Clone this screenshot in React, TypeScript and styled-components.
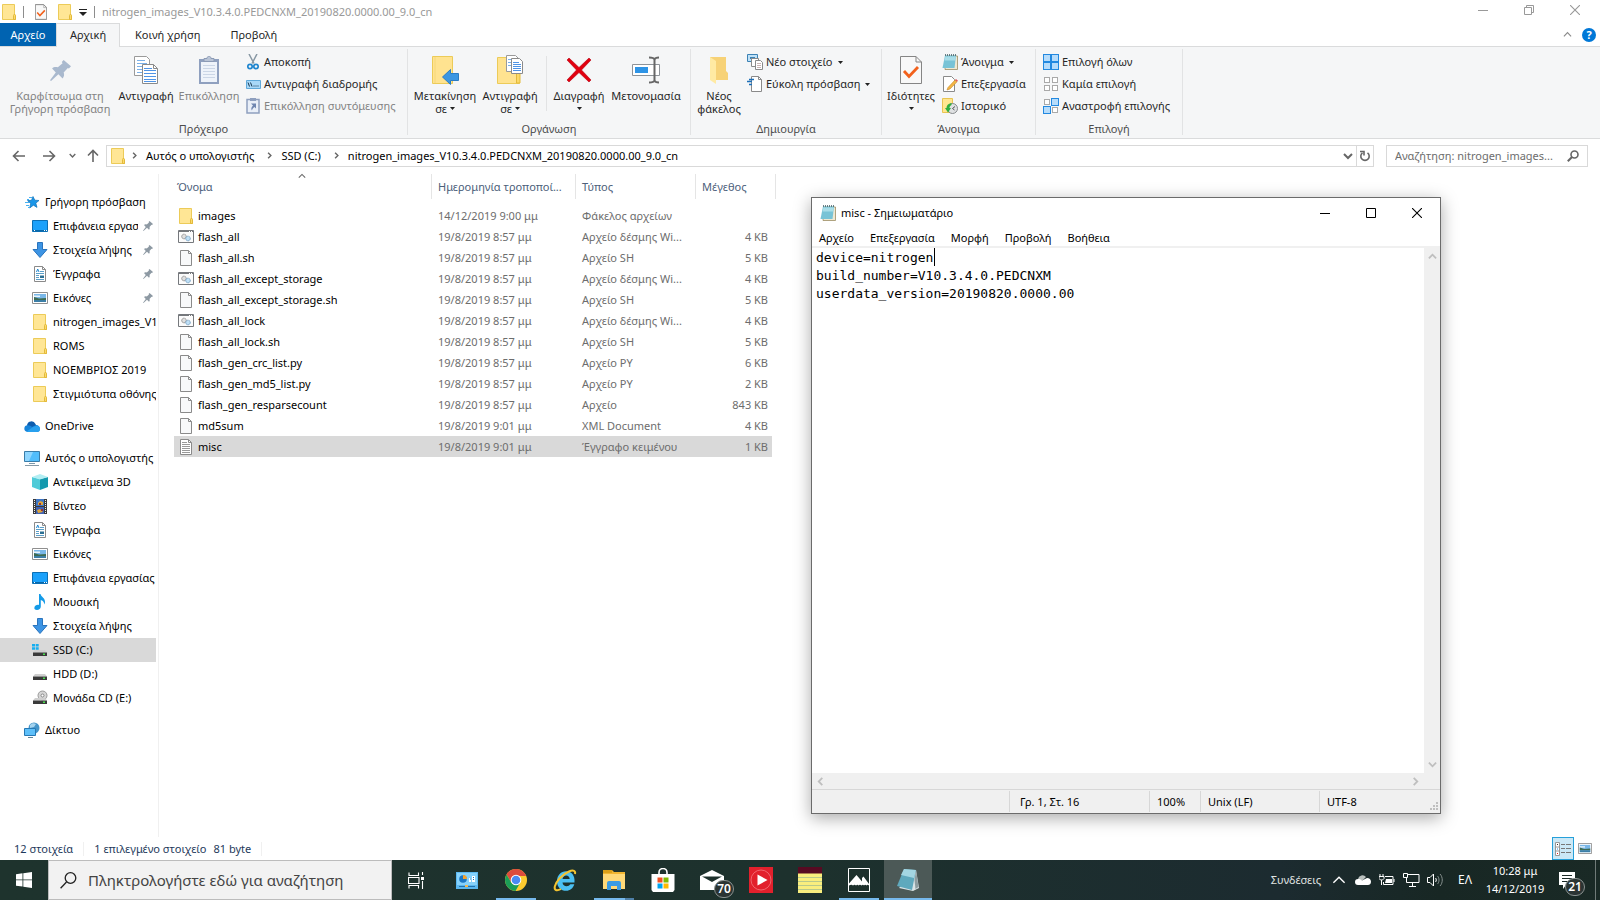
import React from 'react';
import styled, { createGlobalStyle, css } from 'styled-components';

const Global = createGlobalStyle`
  * { box-sizing: border-box; }
  html, body { margin: 0; height: 100%; }
  #root { height: 100%; }
  body {
    font-family: "Noto Sans", "Open Sans", sans-serif;
    font-size: 11px;
    line-height: 14px;
    color: #000;
    background: #fff;
    overflow: hidden;
  }
  button, input, textarea { font: inherit; color: inherit; margin: 0; padding: 0; border: 0; background: none; border-radius: 0; }
  svg { display: block; flex: none; }
  a { color: inherit; text-decoration: none; }
  ul { list-style: none; margin: 0; padding: 0; }
`;

/* ---------- icons ---------- */

const FolderIcon = () => (
  <svg width="14" height="16" viewBox="0 0 14 16">
    <path d="M.5.5h12v11h1v4H.5z" fill="#ffe695" stroke="#eccb58" />
    <path d="M11.5 15.500v-4l1-1.500 1 1.500v4z" fill="#fbdb6c" stroke="#e3b93b" />
  </svg>
);

const PinIcon = ({ size, color }: { size: number; color: string }) => (
  <svg width={size} height={size} viewBox="0 0 20 20">
    <path d="M13 0l7 6-2 2-1-.5-4 4.500c.8 2 .5 4-1 5.500L8 13.500 1 20l-1-.6L5.500 12 2 8c1.500-1.500 3.500-1.700 5.500-1L12 3l-.8-1.200z" fill={color} />
  </svg>
);

const PageIcon = ({ lines = false }: { lines?: boolean }) => (
  <svg width="14" height="16" viewBox="0 0 14 16">
    <path d="M1.500.5h8l3 3v12h-11z" fill={lines ? '#fff' : '#f8f9fa'} stroke="#8a8a8a" />
    <path d="M9.500.5v3h3" fill="none" stroke="#8a8a8a" />
    {lines && <path d="M3 3.500h5M3 5.500h8M3 7.500h8M3 9.500h8M3 11.500h8M3 13.500h8" stroke="#999" />}
  </svg>
);

const BatchIcon = () => (
  <svg width="16" height="13" viewBox="0 0 16 13">
    <path d="M.5.5h15v12H.5z" fill="#fbfbfb" stroke="#75787c" />
    <path d="M1 1.500h14" stroke="#75787c" />
    <path d="M11 1.500h1M13 1.500h1" stroke="#fff" />
    <circle cx="6" cy="6.500" r="2.300" fill="#e0e0e0" stroke="#858585" strokeDasharray="1.300 .5" />
    <circle cx="10" cy="8.500" r="2.300" fill="#bfe0f7" stroke="#6f9cc0" strokeDasharray="1.300 .5" />
  </svg>
);

const StarIcon = () => (
  <svg width="16" height="16" viewBox="0 0 16 16">
    <path d="M9 2.500l1.800 3.700 4.200.3-3.200 2.600 1.200 4.300-3.600-2.200-3.700 2.800 1-4.600L3.500 6.600l4-.3z" fill="#1a96e8" stroke="#0a6fb8" strokeWidth=".7" />
    <path d="M5 3.500h3M3 5.500h2M1 8.500h4M2 11.500h3M4 13.500h2" stroke="#47b0f0" />
  </svg>
);

const DesktopIcon = () => (
  <svg width="16" height="12" viewBox="0 0 16 12">
    <path d="M.5.5h15v11H.5z" fill="#1ba1fb" stroke="#0b6fb5" />
    <path d="M1 10.500h14" stroke="#0867a8" />
    <path d="M2 10.500h1M12 10.500h1M14 10.500h1" stroke="#fff" />
  </svg>
);

const DownIcon = () => (
  <svg width="16" height="16" viewBox="0 0 16 16">
    <path d="M5.500.5h5v7h4.500L8 15.500 1 7.500h4.500z" fill="#3d94e4" stroke="#2a74bd" />
  </svg>
);

const DocsIcon = () => (
  <svg width="12" height="16" viewBox="0 0 12 16">
    <path d="M.5.5h8l3 3v12H.5z" fill="#fff" stroke="#8a8a8a" />
    <path d="M8.500.5v3h3" fill="none" stroke="#8a8a8a" />
    <path d="M6 5.500h4M2 7.500h8M2 9.500h3M2 11.500h3M2 13.500h8" stroke="#5b9fc9" />
    <path d="M2.500 6l1.200-3L5 6" fill="none" stroke="#1e87cf" />
    <path d="M6 9.500h4v2.500H6z" fill="#2b6f93" />
  </svg>
);

const PicturesIcon = ({ w = 16, h = 12 }: { w?: number; h?: number }) => (
  <svg width={w} height={h} viewBox="0 0 16 12" preserveAspectRatio="none">
    <path d="M.5.5h15v11H.5z" fill="#fff" stroke="#8f8f8f" />
    <path d="M2 2h12v8H2z" fill="#79b7e8" />
    <path d="M2 3.500h6v1.500H2z" fill="#e8f3fb" />
    <path d="M2 5l5 1.500 7-.5v2H2z" fill="#3e6b52" />
    <path d="M2 8h12v2H2z" fill="#3c7ea6" />
  </svg>
);

const OneDriveIcon = () => (
  <svg width="16" height="11" viewBox="0 0 16 11">
    <path d="M3 4a4.500 4.500 0 018.500-1L13 6l-9 3z" fill="#0d5cae" />
    <path d="M3.500 11A3.400 3.400 0 014 4.200c2 0 3 .8 4 1.800l4-2c2.500 0 4 2 4 4s-1.300 3-3 3z" fill="#1683d9" />
    <path d="M2.500 10.500L9 6l4-1.500c2 .4 3 2 3 3.700S14.700 11 13 11H4z" fill="#28a0ee" />
  </svg>
);

const PcIcon = () => (
  <svg width="16" height="15" viewBox="0 0 16 15">
    <path d="M.5.5h15v10H.5z" fill="#52bdfb" stroke="#3a7ca8" />
    <path d="M1 1h8L5 10H1z" fill="#8fd6ff" />
    <path d="M5 12.500h6" stroke="#7b98aa" />
    <path d="M1 14.500h14" stroke="#8599a6" />
  </svg>
);

const CubeIcon = () => (
  <svg width="16" height="16" viewBox="0 0 16 16">
    <path d="M0 3l8 2v11l-8-3z" fill="#4fcbd8" />
    <path d="M16 3L8 5v11l8-3z" fill="#1499ae" />
    <path d="M0 3l8-3 8 3-8 2.500z" fill="#b3eef3" />
  </svg>
);

const VideoIcon = () => (
  <svg width="14" height="15" viewBox="0 0 14 15">
    <path d="M0 0h14v15H0z" fill="#3b3b3b" />
    <path d="M3 0h8v7H3z" fill="#3f76c4" />
    <path d="M3 8h8v7H3z" fill="#3e62b5" />
    <path d="M5 4l2-2 3 1v3H5zM4 11l3-1 3 3-5 1z" fill="#e0a73b" />
    <path d="M6 4h2v2H6zM8 10h2v2H8z" fill="#963434" />
    <path d="M1.500 1v14M12.500 1v14" stroke="#eee" strokeDasharray="1 1" />
  </svg>
);

const MusicIcon = () => (
  <svg width="12" height="16" viewBox="0 0 12 16">
    <path d="M5 0h1.500c.5 3 5 4 4.500 8.500-.1.800-.5 1.500-1 2C10.500 7.500 8 6.500 6.800 6v6.500C6.800 14.500 5 16 3 16s-3-1-2.600-2.500C.8 11.500 3 10.500 5 11z" fill="#149be8" />
  </svg>
);

const DriveIcon = ({ kind }: { kind: 'win' | 'hdd' | 'cd' }) => (
  <svg width="16" height="16" viewBox="0 0 16 16">
    {kind === 'win' && <path d="M0 2h3v2.500H0zM3.700 2h3v2.500h-3zM0 5.200h3v2.500H0zM3.700 5.200h3v2.500h-3z" fill="#17aef0" />}
    {kind === 'cd' && (
      <g>
        <circle cx="10.500" cy="5.500" r="4.500" fill="#d6d6d6" stroke="#9a9a9a" />
        <circle cx="10.500" cy="5.500" r="1.500" fill="#fff" stroke="#888" />
      </g>
    )}
    <path d="M3 8h10l2 2.500H1z" fill="#cfcfcf" />
    <path d="M1 10.500h14V14H1z" fill="#3a3a3a" />
    <path d="M11 12.300h2" stroke="#49e04d" strokeWidth="1.500" />
  </svg>
);

const NetworkIcon = () => (
  <svg width="16" height="16" viewBox="0 0 16 16">
    <circle cx="10" cy="6" r="5.500" fill="#4595c9" />
    <path d="M6 3c2-2 4-2 6-1l-2 3-4 1z" fill="#a5d3ee" />
    <path d="M.5 6.500h11v7H.5z" fill="#5dbff9" stroke="#2678b4" />
    <path d="M4 15.500h5" stroke="#5f8297" />
  </svg>
);

const NotepadIcon = () => (
  <svg width="16" height="16" viewBox="0 0 16 16">
    <path d="M4 2h11.500v13.500H3z" fill="#efe8d2" stroke="#9c8d62" strokeWidth=".8" />
    <path d="M3 1.500h11L12.500 14H.5z" fill="#78c3d6" />
    <path d="M3.300 2.500h10.400l-.5 4H2.600z" fill="#a8dde8" />
    <path d="M3 1h11.500" stroke="#3c5963" strokeWidth="1.500" strokeDasharray="1 1" />
  </svg>
);

const CopyIcon = () => (
  <svg width="24" height="28" viewBox="0 0 24 28">
    <path d="M.5.5h12l3 3v16H.5z" fill="#fff" stroke="#9a9a9a" />
    <path d="M3 4.500h8M3 7.500h10M3 10.500h5M3 13.500h5M3 16.500h5" stroke="#7ab0e8" />
    <path d="M8.500 8.500h11l4 4v15h-15z" fill="#fff" stroke="#8a8a8a" />
    <path d="M19.500 8.500v4h4" fill="none" stroke="#8a8a8a" />
    <path d="M10 12.500h8M10 14.500h12M10 17.500h12M10 20.500h12M10 23.500h12M10 25.500h12" stroke="#4f94e6" />
  </svg>
);

const PasteIcon = () => (
  <svg width="20" height="28" viewBox="0 0 20 28">
    <path d="M0 3h20v25H0z" fill="#8fa0bf" />
    <path d="M2 6h16v20H2z" fill="#eef3fa" />
    <path d="M4 9.500h12M4 12.500h12M4 15.500h12M4 18.500h12M4 21.500h12" stroke="#cbd6e6" />
    <path d="M5 2.500h3c0-3 4-3 4 0h3v3H5z" fill="#b9c4d6" stroke="#8b9ab5" />
  </svg>
);

const MoveToIcon = () => (
  <svg width="28" height="30" viewBox="0 0 28 30">
    <path d="M1.500 1.500h20v27h-20z" fill="#ffe390" stroke="#eccb58" />
    <path d="M4 2v26" stroke="#f6d778" />
    <path d="M11.500 22l8-7.500v4h8v7h-8v4z" fill="#3b96e2" stroke="#2a7cc4" />
  </svg>
);

const CopyToIcon = () => (
  <svg width="28" height="30" viewBox="0 0 28 30">
    <path d="M1.500 2.500h19v15h3v11h-22z" fill="#ffe390" stroke="#eccb58" />
    <path d="M20.500 28v-9l2-2 1.500 2v9z" fill="#fbd968" stroke="#e3b93b" />
    <path d="M10.500.5h9l3 3v13h-12z" fill="#fff" stroke="#9a9a9a" />
    <path d="M12 4.500h6M12 7.500h4M12 10.500h4" stroke="#7ab0e8" />
    <path d="M15.500 3.500h8l3 3v12h-11z" fill="#fff" stroke="#8a8a8a" />
    <path d="M17 7.500h6M17 9.500h8M17 11.500h8M17 13.500h8M17 15.500h8" stroke="#4f94e6" />
  </svg>
);

const DeleteIcon = () => (
  <svg width="26" height="26" viewBox="0 0 26 26">
    <path d="M3 1l10 9.500L23 1l2 2-9.500 10L25 23l-2 2-10-9.500L3 25l-2-2 9.500-10L1 3z" fill="#e2000f" stroke="#b60010" strokeWidth=".6" />
  </svg>
);

const RenameIcon = () => (
  <svg width="28" height="28" viewBox="0 0 28 28">
    <path d="M.5 8.500h27v11H.5z" fill="#fff" stroke="#8e9398" />
    <path d="M3 11h13v6H3z" fill="#2e94e6" />
    <path d="M17 1.500c3 0 5 .5 5.500 2 .5-1.500 2-2 4.500-2M17 26.500c3 0 5-.5 5.500-2 .5 1.500 2 2 4.500 2M22.500 3v22" fill="none" stroke="#666" strokeWidth="2" />
  </svg>
);

const NewFolderIcon = () => (
  <svg width="20" height="28" viewBox="0 0 20 28">
    <path d="M1 1h16v14l2 2v7H1z" fill="#f7d277" />
    <path d="M1 1l6 4v23l-6-4z" fill="#ffeaa3" />
  </svg>
);

const CheckPageIcon = ({ w = 22, h = 28 }: { w?: number; h?: number }) => (
  <svg width={w} height={h} viewBox="0 0 22 28">
    <path d="M.5.500h15.500l5.500 5.500v21.500H.5z" fill="#f8f8f8" stroke="#858585" strokeWidth={w < 20 ? 1.800 : 1} />
    <path d="M16 .5V6h5.500" fill="none" stroke="#858585" />
    <path d="M4 15l5 5.500 9-9.500" fill="none" stroke="#f2611c" strokeWidth="2.800" />
  </svg>
);

const CutIcon = () => (
  <svg width="12" height="16" viewBox="0 0 12 16">
    <path d="M2 0l5 9.500M10 0L5 9.500" stroke="#8797a3" strokeWidth="1.500" />
    <circle cx="3" cy="12.500" r="2.200" fill="none" stroke="#2086cf" strokeWidth="1.700" />
    <circle cx="9" cy="12.500" r="2.200" fill="none" stroke="#2086cf" strokeWidth="1.700" />
  </svg>
);

const CopyPathIcon = () => (
  <svg width="15" height="9" viewBox="0 0 15 9">
    <path d="M.5.5h14v8H.5z" fill="#a8d8f8" stroke="#5fa9da" />
    <path d="M2 2.500l1.500 4M4.500 2.500l1.500 4M7.500 6h1M9.500 6h1M11.500 6h1" stroke="#16364f" />
  </svg>
);

const PasteShortcutIcon = () => (
  <svg width="14" height="16" viewBox="0 0 14 16">
    <path d="M1 1.500h12v13.500H1z" fill="#e9eff8" stroke="#8fa0bf" strokeWidth="1.500" />
    <path d="M4 0h6v3H4z" fill="#8fa0bf" />
    <path d="M5 5.500h5v5L8.500 9C7 10 6 11.500 6 12.500c-1.500-2 0-4 1-5z" fill="#6f86b0" />
  </svg>
);

const NewItemIcon = () => (
  <svg width="16" height="16" viewBox="0 0 16 16">
    <path d="M.5.5h10v7H.5z" fill="#bfe1f7" stroke="#3c82b5" />
    <path d="M3 3h5v2H3z" fill="#3c82b5" />
    <path d="M4.500 4.500h7v8h-7z" fill="#fff" stroke="#8a8a8a" />
    <path d="M8.500 6.500h5l2 2v7h-7z" fill="#fff" stroke="#8a8a8a" />
    <path d="M10 9.500h4M10 11.500h4M10 13.500h4" stroke="#c9b4b4" />
  </svg>
);

const EasyAccessIcon = () => (
  <svg width="16" height="16" viewBox="0 0 16 16">
    <path d="M4.500.5h7l3 3v12h-10z" fill="#fff" stroke="#8a8a8a" />
    <path d="M11.500.5v3h3" fill="none" stroke="#8a8a8a" />
    <path d="M2 3.500h5M0 5.500h5M2 8.500h3" stroke="#1d6fb8" strokeWidth="1.300" />
  </svg>
);

const EditIcon = () => (
  <svg width="16" height="16" viewBox="0 0 16 16">
    <path d="M1.500.5h8l3 3v12h-11z" fill="#fff" stroke="#8a8a8a" />
    <path d="M6 11.500L13 4l2 1.800L8 13l-3 1z" fill="#f3b545" stroke="#c58a2b" strokeWidth=".6" />
    <path d="M13 4l1-1 2 1.800-1 1z" fill="#e0565b" />
  </svg>
);

const HistoryIcon = () => (
  <svg width="16" height="16" viewBox="0 0 16 16">
    <path d="M.5.5h10v14H.5z" fill="#ffe690" stroke="#e8c452" />
    <circle cx="10.500" cy="10.500" r="5" fill="#dfe1e3" stroke="#85898c" />
    <path d="M10.500 10.500l2.500-2M10.500 10.500l2 1.500" stroke="#555" />
    <path d="M9.500 5C6 5.500 4.500 7.500 4.500 10H3l3 4.500L9 10H7.500c0-1.500.8-2.500 2-3z" fill="#2fae3e" />
  </svg>
);

const SelectIcon = ({ on }: { on: boolean[] }) => (
  <svg width="16" height="16" viewBox="0 0 16 16">
    {on.map((v, i) => {
      const x = (i % 2) * 8;
      const y = Math.floor(i / 2) * 8;
      return v ? (
        <rect key={i} x={x + 0.5} y={y + 0.5} width="7" height="7" fill="#b6dcfb" stroke="#2389e0" />
      ) : (
        <rect key={i} x={x + 1.500} y={y + 1.500} width="5" height="5" fill="#fff" stroke="#a9a9a9" />
      );
    })}
  </svg>
);

type ChevronProps = { dir: 'up' | 'down' | 'left' | 'right'; w?: number; color?: string; sw?: number };
const Chevron = ({ dir, w = 9, color = '#666', sw = 1.300 }: ChevronProps) => {
  const rot = { down: 0, left: 90, up: 180, right: 270 }[dir];
  return (
    <svg width={w} height={w} viewBox="0 0 10 10">
      <path d="M1 3l4 4 4-4" transform={`rotate(${rot} 5 5)`} fill="none" stroke={color} strokeWidth={sw} />
    </svg>
  );
};

const ArrowIcon = ({ deg }: { deg: number }) => (
  <svg width="14" height="14" viewBox="0 0 14 14">
    <path d="M13 7H2M6.500 2L1.500 7l5 5" transform={`rotate(${deg} 7 7)`} fill="none" stroke="#666" strokeWidth="1.600" />
  </svg>
);

const Caret = () => (
  <svg width="5" height="3" viewBox="0 0 5 3">
    <path d="M0 0h5L2.500 3z" fill="#222" />
  </svg>
);

const MinIcon = () => (
  <svg width="10" height="10" viewBox="0 0 10 10"><path d="M0 5.500h10" stroke="currentColor" /></svg>
);
const MaxIcon = () => (
  <svg width="10" height="10" viewBox="0 0 10 10"><path d="M.5.5h9v9h-9z" fill="none" stroke="currentColor" /></svg>
);
const RestoreIcon = () => (
  <svg width="10" height="10" viewBox="0 0 10 10"><path d="M.5 2.500h7v7h-7zM2.500 2.500v-2h7v7h-2" fill="none" stroke="currentColor" /></svg>
);
const CloseIcon = () => (
  <svg width="10" height="10" viewBox="0 0 10 10"><path d="M0 0l10 10M10 0L0 10" stroke="currentColor" strokeWidth="1.100" /></svg>
);

/* ---------- explorer: title bar and tabs ---------- */

const Desktop = styled.div`
  position: relative;
  display: flex;
  flex-direction: column;
  height: 100%;
  min-height: 640px;
`;

const Explorer = styled.main`
  flex: 1;
  min-height: 0;
  display: flex;
  flex-direction: column;
`;

const TitleBar = styled.header`
  display: flex;
  align-items: center;
  height: 23px;
  color: #999;
`;

const QuickTools = styled.div`
  display: flex;
  align-items: center;
  gap: 7px;
  padding: 1px 7px 0 2px;
`;

const ToolButton = styled.button<{ $pad?: number }>`
  display: flex;
  align-items: center;
  padding: 0 ${(p) => p.$pad || 0}px;
`;

const Bar = styled.span`
  width: 1px;
  height: 12px;
  background: #8d8d8d;
`;

const WindowTitle = styled.h1`
  flex: 1;
  margin: 0;
  font-size: 11px;
  font-weight: 400;
`;

const WindowButton = styled.button<{ $h: number }>`
  display: flex;
  justify-content: center;
  align-items: center;
  width: 46px;
  height: ${(p) => p.$h}px;
`;

const WindowButtons = styled.div<{ $pad?: number }>`
  display: flex;
  align-self: flex-start;
  padding-right: ${(p) => p.$pad || 0}px;
`;

const Tabs = styled.nav`
  display: flex;
  height: 24px;
  border-bottom: 1px solid #dadbdc;
`;

const Tab = styled.button<{ $kind?: 'file' | 'active' }>`
  height: 23px;
  padding: 0 15px;
  color: #262626;
  ${(p) => p.$kind === 'file' && css`
    width: 56px;
    padding: 0;
    background: #0063b1;
    color: #fff;
  `}
  ${(p) => p.$kind === 'active' && css`
    width: 64px;
    height: 24px;
    padding: 0 0 2px;
    background: #f5f6f7;
    border: 1px solid #dadbdc;
    border-bottom: 0;
  `}
`;

const TabsEnd = styled.div`
  display: flex;
  align-items: center;
  gap: 10px;
  margin-left: auto;
  padding-right: 4px;
`;

const HelpButton = styled.button`
  width: 14px;
  height: 14px;
  border-radius: 7px;
  background: #0078d7;
  color: #fff;
  font-weight: 700;
  line-height: 14px;
`;

/* ---------- ribbon ---------- */

const Ribbon = styled.section`
  display: flex;
  height: 92px;
  padding: 2px 0 3px;
  background: #f5f6f7;
  border-bottom: 1px solid #dadbdc;
`;

const Group = styled.div<{ $w: number }>`
  display: flex;
  flex-direction: column;
  flex: none;
  width: ${(p) => p.$w}px;
  border-right: 1px solid #e2e3e4;
`;

const GroupBody = styled.div<{ $pad?: number }>`
  display: flex;
  flex: 1;
  padding-left: ${(p) => p.$pad || 0}px;
`;

const GroupLabel = styled.div`
  height: 15px;
  line-height: 18px;
  text-align: center;
  color: #4c4c4c;
`;

const BigButton = styled.button<{ $w: number }>`
  display: flex;
  flex-direction: column;
  align-items: center;
  width: ${(p) => p.$w}px;
  padding-top: 4px;
  line-height: 13px;
  white-space: nowrap;
  color: #262626;
  &:disabled { color: #838383; }
`;

const BigIcon = styled.span`
  display: flex;
  align-items: center;
  height: 34px;
  margin-bottom: 2px;
`;

const CaretLine = styled.span`
  display: flex;
  align-items: center;
  justify-content: center;
  gap: 3px;
  height: 13px;
`;

const GroupSplit = styled.span`
  width: 1px;
  height: 55px;
  margin: 7px 3px 0 4px;
  background: #e2e3e4;
`;

const SmallColumn = styled.div<{ $pad?: number }>`
  display: flex;
  flex-direction: column;
  padding: 2px 0 0 ${(p) => p.$pad || 0}px;
`;

const SmallButton = styled.button`
  display: flex;
  align-items: center;
  gap: 3px;
  height: 22px;
  white-space: nowrap;
  color: #262626;
  &:disabled { color: #838383; }
  svg:last-child:not(:first-child) { margin-left: 2px; }
`;

const SmallIcon = styled.span`
  display: flex;
  justify-content: center;
  width: 16px;
`;

type BigProps = { w: number; icon: React.ReactNode; lines: string[]; menu?: boolean; disabled?: boolean };
const Big = ({ w, icon, lines, menu, disabled }: BigProps) => (
  <BigButton $w={w} disabled={disabled}>
    <BigIcon>{icon}</BigIcon>
    <span>{lines[0]}</span>
    {(lines[1] || menu) && <CaretLine>{lines[1]}{menu && <Caret />}</CaretLine>}
  </BigButton>
);

type SmallProps = { icon: React.ReactNode; label: string; menu?: boolean; disabled?: boolean };
const Small = ({ icon, label, menu, disabled }: SmallProps) => (
  <SmallButton disabled={disabled}>
    <SmallIcon>{icon}</SmallIcon>
    <span>{label}</span>
    {menu && <Caret />}
  </SmallButton>
);

/* ---------- address row ---------- */

const AddressRow = styled.div`
  display: flex;
  align-items: center;
  height: 33px;
  padding: 0 12px;
`;

const NavButtons = styled.div`
  display: flex;
  align-items: center;
  width: 94px;
  gap: 16px;
  button:nth-child(3) { margin: 0 -6px 0 -3px; }
`;

const AddressBox = styled.div`
  display: flex;
  align-items: center;
  flex: 1;
  height: 22px;
  padding-left: 4px;
  border: 1px solid #d9d9d9;
`;

const Crumbs = styled.ul`
  display: flex;
  flex: 1;
  li { display: flex; align-items: center; gap: 8px; padding: 0 6px 0 6px; }
`;

const AddressTool = styled.button<{ $line?: boolean }>`
  display: flex;
  align-items: center;
  justify-content: center;
  width: 17px;
  height: 20px;
  border-left: ${(p) => (p.$line ? '1px solid #d9d9d9' : '0')};
`;

const SearchBox = styled.label`
  display: flex;
  align-items: center;
  width: 202px;
  height: 22px;
  margin-left: 12px;
  padding: 0 8px;
  border: 1px solid #d9d9d9;
  input { flex: 1; min-width: 0; outline: 0; text-overflow: ellipsis; }
  input::placeholder { color: #6d6d6d; opacity: 1; }
`;

/* ---------- navigation pane and file list ---------- */

const Body = styled.div`
  display: flex;
  flex: 1;
  min-height: 0;
  padding-top: 2px;
`;

const Sidebar = styled.nav`
  flex: none;
  width: 159px;
  padding: 16px 2px 0 0;
  border-right: 1px solid #f0f0f0;
  overflow: hidden;
`;

const TreeGroup = styled.ul`
  margin-bottom: 8px;
`;

const TreeLink = styled.a<{ $top?: boolean; $selected?: boolean }>`
  display: flex;
  align-items: center;
  gap: 5px;
  height: 24px;
  padding-left: ${(p) => (p.$top ? 24 : 32)}px;
  background: ${(p) => (p.$selected ? '#d9d9d9' : 'transparent')};
`;

const TreeText = styled.span`
  flex: 1;
  min-width: 0;
  overflow: hidden;
  white-space: nowrap;
`;

const PinSlot = styled.span`
  padding-right: 3px;
`;

const ListPane = styled.section`
  flex: 1;
  padding-left: 15px;
`;

const FileTable = styled.table`
  width: 598px;
  table-layout: fixed;
  border-collapse: collapse;
`;

const HeadCell = styled.th`
  position: relative;
  height: 31px;
  padding: 0;
  vertical-align: top;
  font-weight: 400;
`;

const HeadButton = styled.button<{ $pad: number; $wide?: boolean }>`
  display: block;
  width: ${(p) => (p.$wide ? '80px' : '100%')};
  height: 25px;
  padding-left: ${(p) => p.$pad}px;
  border-right: 1px solid #e5e5e5;
  text-align: left;
  white-space: nowrap;
  color: #4c607a;
`;

const SortMark = styled.span`
  position: absolute;
  top: -2px;
  left: 48%;
`;

const FileRow = styled.tr<{ $selected?: boolean }>`
  height: 21px;
  background: ${(p) => (p.$selected ? '#d9d9d9' : 'transparent')};
`;

const Cell = styled.td<{ $right?: boolean }>`
  height: 21px;
  padding: 0 4px 0 6px;
  text-align: ${(p) => (p.$right ? 'right' : 'left')};
  white-space: nowrap;
  color: #6d6d6d;
`;

const NameCell = styled(Cell)`
  color: #000;
  padding-left: 4px;
`;

const FileName = styled.span`
  display: flex;
  align-items: center;
  gap: 4px;
`;

const StatusBar = styled.footer`
  display: flex;
  align-items: center;
  height: 23px;
  padding-left: 14px;
  color: #1e395b;
`;

const StatusPart = styled.span`
  padding-right: 10px;
  margin-right: 10px;
  border-right: 1px solid #f0f0f0;
  span { margin-left: 7px; }
`;

const ViewButtons = styled.div`
  display: flex;
  align-self: stretch;
  margin-left: auto;
  padding-right: 4px;
`;

const ViewButton = styled.button<{ $on?: boolean }>`
  display: flex;
  align-items: center;
  justify-content: center;
  width: 22px;
  border: 1px solid ${(p) => (p.$on ? '#26a0da' : 'transparent')};
  background: ${(p) => (p.$on ? '#cbe8f6' : 'transparent')};
`;

/* ---------- notepad ---------- */

const Notepad = styled.section`
  position: absolute;
  left: 811px;
  top: 197px;
  width: 630px;
  height: 617px;
  display: flex;
  flex-direction: column;
  background: #fff;
  border: 1px solid #6b6b6b;
  box-shadow: 0 4px 16px rgba(0, 0, 0, 0.34);
`;

const NoteTitle = styled.header`
  display: flex;
  align-items: center;
  gap: 5px;
  height: 29px;
  padding-left: 8px;
  h2 { flex: 1; margin: 0; font-size: 11px; font-weight: 400; }
`;

const NoteMenu = styled.nav`
  display: flex;
  gap: 16px;
  height: 21px;
  padding: 3px 0 0 7px;
  border-bottom: 2px solid #f0f0f0;
`;

const NoteBody = styled.div`
  display: grid;
  grid-template-columns: 1fr 16px;
  grid-template-rows: 1fr 16px;
  flex: 1;
  background: #f0f0f0;
`;

const NotePage = styled.div`
  position: relative;
  display: flex;
  background: #fff;
  font: 13px/18px "DejaVu Sans Mono", monospace;
  textarea {
    flex: 1;
    padding: 1px 4px 0;
    border: 0;
    outline: 0;
    resize: none;
    overflow: hidden;
  }
`;

const TextCaret = styled.span`
  position: absolute;
  top: 0;
  left: calc(15ch + 5px);
  width: 1px;
  height: 18px;
  background: #000;
`;

const ScrollBar = styled.div<{ $vertical?: boolean }>`
  display: flex;
  flex-direction: ${(p) => (p.$vertical ? 'column' : 'row')};
  justify-content: space-between;
  align-items: center;
  padding: ${(p) => (p.$vertical ? '4px 0' : '0 4px')};
`;

const NoteStatus = styled.footer`
  display: grid;
  grid-template-columns: 198px 140px 51px 119px 1fr;
  height: 24px;
  padding: 1px 0;
  background: #f0f0f0;
  border-top: 1px solid #d7d7d7;
`;

const NoteField = styled.span<{ $pad?: number; $last?: boolean }>`
  display: flex;
  align-items: center;
  justify-content: space-between;
  padding-left: ${(p) => p.$pad ?? 7}px;
  border-right: ${(p) => (p.$last ? '0' : '1px solid #d7d7d7')};
`;

const Grip = styled.span`
  align-self: flex-end;
  padding: 0 1px 1px 0;
`;

/* ---------- taskbar ---------- */

const Taskbar = styled.footer`
  display: flex;
  flex: none;
  height: 40px;
  background: linear-gradient(90deg, #1e332d 0%, #1d312d 50%, #1c2b30 80%, #182724 90%, #1a2a26 100%);
  color: #fff;
`;

const StartButton = styled.button`
  display: flex;
  align-items: center;
  justify-content: center;
  width: 48px;
`;

const TaskSearch = styled.label`
  display: flex;
  align-items: center;
  gap: 11px;
  width: 344px;
  padding-left: 11px;
  background: #f2f2f2;
  border: 1px solid #bcbcbc;
  color: #333;
  font-size: 15px;
  input { flex: 1; min-width: 0; height: 28px; outline: 0; }
  input::placeholder { color: #444; opacity: 1; }
`;

const TaskButton = styled.button<{ $state?: 'open' | 'active' | 'stack' }>`
  position: relative;
  display: flex;
  align-items: center;
  justify-content: center;
  width: 48px;
  margin-right: 1px;
  background: ${(p) => (p.$state === 'active' ? '#4c5957' : 'transparent')};
  &::after {
    content: "";
    position: absolute;
    bottom: 0;
    left: ${(p) => (p.$state === 'active' ? 0 : 4)}px;
    right: ${(p) => (p.$state === 'active' ? 0 : 4)}px;
    height: 2px;
    background: ${(p) =>
      !p.$state ? 'transparent' : p.$state === 'stack' ? 'linear-gradient(90deg, #76b9ed 31px, #4f80a8 31px)' : '#76b9ed'};
  }
`;

const TaskView = styled(TaskButton)`
  width: 49px;
  margin-right: 2px;
`;

const Badge = styled.span<{ $x: number; $y: number }>`
  position: absolute;
  left: ${(p) => p.$x}px;
  top: ${(p) => p.$y}px;
  min-width: 20px;
  height: 18px;
  border: 1px solid #8a9290;
  border-radius: 9px;
  background: #2b3433;
  font-size: 12px;
  font-weight: 600;
  line-height: 16px;
  text-align: center;
`;

const Tray = styled.div`
  display: flex;
  align-items: center;
  margin-left: auto;
`;

const TrayLabel = styled.span`
  padding-right: 6px;
  color: #e0e4e3;
`;

const TrayButton = styled.button`
  display: flex;
  align-items: center;
  justify-content: center;
  width: 24px;
  height: 40px;
`;

const Language = styled.button`
  width: 36px;
  height: 40px;
  font-size: 12px;
`;

const Clock = styled.time`
  width: 64px;
  line-height: 18px;
  text-align: center;
`;

const NoticeButton = styled.button`
  position: relative;
  display: flex;
  align-items: flex-start;
  width: 48px;
  height: 40px;
  padding: 12px 0 0 12px;
`;

const ShowDesktop = styled.button`
  width: 5px;
  height: 40px;
  border-left: 1px solid #707b78;
`;

/* ---------- data ---------- */

type TreeItem = { label: string; icon: React.ReactNode; pin?: boolean; selected?: boolean };

const tree: TreeItem[][] = [
  [
    { label: 'Γρήγορη πρόσβαση', icon: <StarIcon /> },
    { label: 'Επιφάνεια εργασίας', icon: <DesktopIcon />, pin: true },
    { label: 'Στοιχεία λήψης', icon: <DownIcon />, pin: true },
    { label: 'Έγγραφα', icon: <DocsIcon />, pin: true },
    { label: 'Εικόνες', icon: <PicturesIcon />, pin: true },
    { label: 'nitrogen_images_V10.3', icon: <FolderIcon /> },
    { label: 'ROMS', icon: <FolderIcon /> },
    { label: 'ΝΟΕΜΒΡΙΟΣ 2019', icon: <FolderIcon /> },
    { label: 'Στιγμιότυπα οθόνης', icon: <FolderIcon /> },
  ],
  [{ label: 'OneDrive', icon: <OneDriveIcon /> }],
  [
    { label: 'Αυτός ο υπολογιστής', icon: <PcIcon /> },
    { label: 'Αντικείμενα 3D', icon: <CubeIcon /> },
    { label: 'Βίντεο', icon: <VideoIcon /> },
    { label: 'Έγγραφα', icon: <DocsIcon /> },
    { label: 'Εικόνες', icon: <PicturesIcon /> },
    { label: 'Επιφάνεια εργασίας', icon: <DesktopIcon /> },
    { label: 'Μουσική', icon: <MusicIcon /> },
    { label: 'Στοιχεία λήψης', icon: <DownIcon /> },
    { label: 'SSD (C:)', icon: <DriveIcon kind="win" />, selected: true },
    { label: 'HDD (D:)', icon: <DriveIcon kind="hdd" /> },
    { label: 'Μονάδα CD (E:)', icon: <DriveIcon kind="cd" /> },
  ],
  [{ label: 'Δίκτυο', icon: <NetworkIcon /> }],
];

const early = '19/8/2019 8:57 μμ';
const late = '19/8/2019 9:01 μμ';
const files: [string, string, string, string, 'dir' | 'bat' | 'page' | 'text'][] = [
  ['images', '14/12/2019 9:00 μμ', 'Φάκελος αρχείων', '', 'dir'],
  ['flash_all', early, 'Αρχείο δέσμης Wi...', '4 KB', 'bat'],
  ['flash_all.sh', early, 'Αρχείο SH', '5 KB', 'page'],
  ['flash_all_except_storage', early, 'Αρχείο δέσμης Wi...', '4 KB', 'bat'],
  ['flash_all_except_storage.sh', early, 'Αρχείο SH', '5 KB', 'page'],
  ['flash_all_lock', early, 'Αρχείο δέσμης Wi...', '4 KB', 'bat'],
  ['flash_all_lock.sh', early, 'Αρχείο SH', '5 KB', 'page'],
  ['flash_gen_crc_list.py', early, 'Αρχείο PY', '6 KB', 'page'],
  ['flash_gen_md5_list.py', early, 'Αρχείο PY', '2 KB', 'page'],
  ['flash_gen_resparsecount', early, 'Αρχείο', '843 KB', 'page'],
  ['md5sum', late, 'XML Document', '4 KB', 'page'],
  ['misc', late, 'Έγγραφο κειμένου', '1 KB', 'text'],
];

const fileIcon = {
  dir: <FolderIcon />,
  bat: <BatchIcon />,
  page: <PageIcon />,
  text: <PageIcon lines />,
};

const folderName = 'nitrogen_images_V10.3.4.0.PEDCNXM_20190820.0000.00_9.0_cn';
const noteText = 'device=nitrogen\nbuild_number=V10.3.4.0.PEDCNXM\nuserdata_version=20190820.0000.00';

/* ---------- taskbar pictures ---------- */

const taskApps: { name: string; state?: 'open' | 'active' | 'stack'; icon: React.ReactNode; badge?: string }[] = [
  {
    name: 'Control',
    icon: (
      <svg width="22" height="17" viewBox="0 0 22 17">
        <path d="M0 0h22v17H0z" fill="#5bb8f0" />
        <path d="M1 1h20v12H1z" fill="#86d2fb" />
        <circle cx="7" cy="7" r="3.800" fill="#1b77c5" />
        <path d="M7 7V3a4 4 0 014 4z" fill="#f5a12c" />
        <path d="M13 6h2v4h-2zM16 4h3v6h-3z" fill="#fff" />
        <path d="M14 7h1M17 5.500h1M17 7.500h1" stroke="#2272ad" />
        <path d="M3 14.500h16" stroke="#2272ad" />
        <path d="M9 13h3v2H9z" fill="#f3b64c" />
      </svg>
    ),
  },
  {
    name: 'Chrome',
    state: 'open',
    icon: (
      <svg width="24" height="24" viewBox="0 0 24 24">
        <circle cx="12" cy="12" r="11" fill="#fccb2f" />
        <path d="M2.500 6.500A11 11 0 0121.500 6.500L22 8H12l-5 6z" fill="#dd4b3e" />
        <path d="M2.500 6.500A11 11 0 0011.500 23l4.800-8.500L12 17l-4.500-2z" fill="#1b9d57" />
        <circle cx="12" cy="12" r="5.300" fill="#fff" />
        <circle cx="12" cy="12" r="4.300" fill="#4a8af4" />
      </svg>
    ),
  },
  {
    name: 'Internet Explorer',
    icon: (
      <svg width="24" height="24" viewBox="0 0 24 24">
        <path d="M21.500 14.500H9.500c.3 2.600 2 3.700 4 3.700 1.800 0 3-.7 3.800-1.900h4C20 20.500 17 22.800 13.300 22.800c-5.500 0-9.300-3.900-9.300-9.600 0-5.900 4-9.900 9.100-9.900 5.600 0 9 4.300 8.400 11.200zM9.500 11h7.200c-.2-2.200-1.500-3.500-3.400-3.500S9.900 8.800 9.500 11z" fill="#4bc0f2" />
        <path d="M22 6c.8-3-1.500-4.500-6-2.500C9 6.500 3 13.500 1.800 18.500 1 22 3.500 23.500 8 21" fill="none" stroke="#f4c430" strokeWidth="2" />
      </svg>
    ),
  },
  {
    name: 'Explorer',
    state: 'stack',
    icon: (
      <svg width="22" height="20" viewBox="0 0 22 20">
        <path d="M0 0h9l2 2h11v17H0z" fill="#f2b632" />
        <path d="M0 4h22v15H0z" fill="#ffd978" />
        <path d="M0 0h9v3H0z" fill="#dca019" />
        <path d="M4 20v-7q0-2 2-2h10q2 0 2 2v7h-4v-4H8v4z" fill="#3a9be3" />
      </svg>
    ),
  },
  {
    name: 'Store',
    icon: (
      <svg width="24" height="24" viewBox="0 0 24 24">
        <path d="M8 7V4.500a4 4 0 018 0V7" fill="none" stroke="#fff" strokeWidth="1.600" />
        <path d="M.5 6h23v16l-1.500 2H2L.5 22z" fill="#fff" />
        <path d="M6.500 9.500h5v5h-5z" fill="#f25022" />
        <path d="M12.500 9.500h5v5h-5z" fill="#7fba00" />
        <path d="M6.500 15.500h5v5h-5z" fill="#00a4ef" />
        <path d="M12.500 15.500h5v5h-5z" fill="#ffb900" />
      </svg>
    ),
  },
  {
    name: 'Mail',
    badge: '70',
    icon: (
      <svg width="24" height="20" viewBox="0 0 24 20">
        <path d="M0 6l12-6 12 6v14H0z" fill="#fff" />
        <path d="M2 6.500h20L12 12z" fill="#1d302c" />
      </svg>
    ),
  },
  {
    name: 'Player',
    icon: (
      <svg width="24" height="26" viewBox="0 0 24 26">
        <path d="M0 0h24v26H0z" fill="#e2202c" />
        <circle cx="12" cy="13" r="10" fill="none" stroke="#f0646c" />
        <path d="M8.500 7.500v11l10-5.500z" fill="#fff" />
      </svg>
    ),
  },
  {
    name: 'Notes',
    icon: (
      <svg width="24" height="26" viewBox="0 0 24 26">
        <path d="M0 0h24v26H0z" fill="#f9ee7e" />
        <path d="M0 0h24v6.500H0z" fill="#570a22" />
        <path d="M0 10.500h24M0 14.500h24M0 18.500h24M0 22.500h24" stroke="#b9c98b" />
      </svg>
    ),
  },
  {
    name: 'Photos',
    state: 'open',
    icon: (
      <svg width="22" height="24" viewBox="0 0 22 24">
        <path d="M.5.5h21v23H.5z" fill="#1d302c" stroke="#fff" />
        <path d="M1 15.500L8.500 7l5.500 6.500V10l1.500-1.500L21 16v1.500q-1.500-1.500-2.500 0-1.500-1.500-2.500 0-1-1.500-2.500 0-1.500-1.500-3 0-1-1.500-2.500 0-1.500-1.500-3 0-1.500-1.500-4 0z" fill="#fff" />
      </svg>
    ),
  },
  {
    name: 'Notepad',
    state: 'active',
    icon: (
      <svg width="24" height="24" viewBox="0 0 24 24">
        <path d="M20 2l3 18-6 3L3 20z" fill="#d9e4e6" />
        <path d="M8 1l12 1-4 20-15-4z" fill="#5fa9bd" />
        <path d="M8 1l12 1-2 8L5 7z" fill="#a4d6e2" />
        <path d="M20 2l2.500 17-3 2-1-9z" fill="#8d9c9f" />
      </svg>
    ),
  },
];

/* ---------- page ---------- */

export default function App() {
  return (
    <Desktop>
      <Global />
      <Explorer>
        <TitleBar>
          <QuickTools>
            <FolderIcon />
            <Bar />
            <ToolButton $pad={4} aria-label="Ιδιότητες"><CheckPageIcon w={12} h={16} /></ToolButton>
            <ToolButton aria-label="Νέος φάκελος"><FolderIcon /></ToolButton>
            <ToolButton aria-label="Προσαρμογή">
              <svg width="8" height="8" viewBox="0 0 8 8"><path d="M0 1.500h8" stroke="#222" /><path d="M0 4h8L4 8z" fill="#222" /></svg>
            </ToolButton>
            <Bar />
          </QuickTools>
          <WindowTitle>{folderName}</WindowTitle>
          <WindowButtons $pad={2}>
            <WindowButton $h={20} aria-label="Ελαχιστοποίηση"><MinIcon /></WindowButton>
            <WindowButton $h={20} aria-label="Επαναφορά"><RestoreIcon /></WindowButton>
            <WindowButton $h={20} aria-label="Κλείσιμο"><CloseIcon /></WindowButton>
          </WindowButtons>
        </TitleBar>

        <Tabs>
          <Tab $kind="file">Αρχείο</Tab>
          <Tab $kind="active">Αρχική</Tab>
          <Tab>Κοινή χρήση</Tab>
          <Tab>Προβολή</Tab>
          <TabsEnd>
            <Chevron dir="up" color="#8a8a8a" />
            <HelpButton>?</HelpButton>
          </TabsEnd>
        </Tabs>

        <Ribbon>
          <Group $w={408}>
            <GroupBody $pad={4}>
              <Big w={112} icon={<PinIcon size={21} color="#a9b9ce" />} lines={['Καρφίτσωμα στη', 'Γρήγορη πρόσβαση']} disabled />
              <Big w={60} icon={<CopyIcon />} lines={['Αντιγραφή']} />
              <Big w={66} icon={<PasteIcon />} lines={['Επικόλληση']} disabled />
              <SmallColumn $pad={3}>
                <Small icon={<CutIcon />} label="Αποκοπή" />
                <Small icon={<CopyPathIcon />} label="Αντιγραφή διαδρομής" />
                <Small icon={<PasteShortcutIcon />} label="Επικόλληση συντόμευσης" disabled />
              </SmallColumn>
            </GroupBody>
            <GroupLabel>Πρόχειρο</GroupLabel>
          </Group>
          <Group $w={283}>
            <GroupBody $pad={4}>
              <Big w={66} icon={<MoveToIcon />} lines={['Μετακίνηση', 'σε']} menu />
              <Big w={64} icon={<CopyToIcon />} lines={['Αντιγραφή', 'σε']} menu />
              <GroupSplit />
              <Big w={58} icon={<DeleteIcon />} lines={['Διαγραφή']} menu />
              <Big w={76} icon={<RenameIcon />} lines={['Μετονομασία']} />
            </GroupBody>
            <GroupLabel>Οργάνωση</GroupLabel>
          </Group>
          <Group $w={191}>
            <GroupBody>
              <Big w={56} icon={<NewFolderIcon />} lines={['Νέος', 'φάκελος']} />
              <SmallColumn>
                <Small icon={<NewItemIcon />} label="Νέο στοιχείο" menu />
                <Small icon={<EasyAccessIcon />} label="Εύκολη πρόσβαση" menu />
              </SmallColumn>
            </GroupBody>
            <GroupLabel>Δημιουργία</GroupLabel>
          </Group>
          <Group $w={154}>
            <GroupBody>
              <Big w={58} icon={<CheckPageIcon />} lines={['Ιδιότητες']} menu />
              <SmallColumn $pad={2}>
                <Small icon={<NotepadIcon />} label="Άνοιγμα" menu />
                <Small icon={<EditIcon />} label="Επεξεργασία" />
                <Small icon={<HistoryIcon />} label="Ιστορικό" />
              </SmallColumn>
            </GroupBody>
            <GroupLabel>Άνοιγμα</GroupLabel>
          </Group>
          <Group $w={147}>
            <GroupBody>
              <SmallColumn $pad={7}>
                <Small icon={<SelectIcon on={[true, true, true, true]} />} label="Επιλογή όλων" />
                <Small icon={<SelectIcon on={[false, false, false, false]} />} label="Καμία επιλογή" />
                <Small icon={<SelectIcon on={[false, true, true, false]} />} label="Αναστροφή επιλογής" />
              </SmallColumn>
            </GroupBody>
            <GroupLabel>Επιλογή</GroupLabel>
          </Group>
        </Ribbon>

        <AddressRow>
          <NavButtons>
            <button aria-label="Πίσω"><ArrowIcon deg={0} /></button>
            <button aria-label="Εμπρός"><ArrowIcon deg={180} /></button>
            <button aria-label="Πρόσφατα"><Chevron dir="down" w={7} sw={2} /></button>
            <button aria-label="Επάνω"><ArrowIcon deg={90} /></button>
          </NavButtons>
          <AddressBox>
            <FolderIcon />
            <Crumbs>
              {['Αυτός ο υπολογιστής', 'SSD (C:)', folderName].map((c) => (
                <li key={c}>
                  <Chevron dir="right" w={7} sw={2} />
                  <a href="#crumb">{c}</a>
                </li>
              ))}
            </Crumbs>
            <AddressTool aria-label="Προηγούμενες θέσεις"><Chevron dir="down" w={10} sw={2} /></AddressTool>
            <AddressTool $line aria-label="Ανανέωση">
              <svg width="12" height="12" viewBox="0 0 12 12"><path d="M8.500 2.800a4.200 4.200 0 11-5 0M1 1.500h4v4" fill="none" stroke="#666" strokeWidth="1.600" /></svg>
            </AddressTool>
          </AddressBox>
          <SearchBox>
            <input aria-label="Αναζήτηση" placeholder="Αναζήτηση: nitrogen_images..." />
            <svg width="12" height="12" viewBox="0 0 12 12"><circle cx="7.500" cy="4.500" r="3.500" fill="none" stroke="#666" strokeWidth="1.600" /><path d="M5 7L.8 11.200" stroke="#666" strokeWidth="2" /></svg>
          </SearchBox>
        </AddressRow>

        <Body>
          <Sidebar>
            {tree.map((group, g) => (
              <TreeGroup key={g}>
                {group.map((item, i) => (
                  <li key={item.label}>
                    <TreeLink href="#place" $top={i === 0} $selected={item.selected}>
                      <SmallIcon>{item.icon}</SmallIcon>
                      <TreeText>{item.label}</TreeText>
                      {item.pin && <PinSlot><PinIcon size={10} color="#8d99a3" /></PinSlot>}
                    </TreeLink>
                  </li>
                ))}
              </TreeGroup>
            ))}
          </Sidebar>
          <ListPane>
            <FileTable>
              <colgroup>
                <col width="258" />
                <col width="144" />
                <col width="120" />
                <col width="76" />
              </colgroup>
              <thead>
                <tr>
                  <HeadCell>
                    <HeadButton $pad={3}>Όνομα</HeadButton>
                    <SortMark><Chevron dir="up" w={8} /></SortMark>
                  </HeadCell>
                  <HeadCell><HeadButton $pad={6}>Ημερομηνία τροποποί...</HeadButton></HeadCell>
                  <HeadCell><HeadButton $pad={6}>Τύπος</HeadButton></HeadCell>
                  <HeadCell><HeadButton $pad={6} $wide>Μέγεθος</HeadButton></HeadCell>
                </tr>
              </thead>
              <tbody>
                {files.map(([name, date, type, size, kind]) => (
                  <FileRow key={name} $selected={name === 'misc'}>
                    <NameCell>
                      <FileName><SmallIcon>{fileIcon[kind]}</SmallIcon>{name}</FileName>
                    </NameCell>
                    <Cell>{date}</Cell>
                    <Cell>{type}</Cell>
                    <Cell $right>{size}</Cell>
                  </FileRow>
                ))}
              </tbody>
            </FileTable>
          </ListPane>
        </Body>

        <StatusBar>
          <StatusPart>12 στοιχεία</StatusPart>
          <StatusPart>1 επιλεγμένο στοιχείο<span>81 byte</span></StatusPart>
          <ViewButtons>
            <ViewButton $on aria-label="Λεπτομέρειες">
              <svg width="16" height="14" viewBox="0 0 16 14">
                <path d="M.5.5h4v13h-4zM.5 5h4M.5 9h4" fill="#fff" stroke="#999" />
                <path d="M6 2.500h4M11 2.500h5M6 6.500h4M11 6.500h5M6 10.500h4M11 10.500h5" stroke="#777" />
                <path d="M2 2.500h1" stroke="#333" /><path d="M2 7h1" stroke="#2389e0" /><path d="M2 11.500h1" stroke="#d22" />
              </svg>
            </ViewButton>
            <ViewButton aria-label="Μικρογραφίες"><PicturesIcon w={14} h={11} /></ViewButton>
          </ViewButtons>
        </StatusBar>
      </Explorer>

      <Notepad>
        <NoteTitle>
          <NotepadIcon />
          <h2>misc - Σημειωματάριο</h2>
          <WindowButtons>
            <WindowButton $h={29} aria-label="Ελαχιστοποίηση"><MinIcon /></WindowButton>
            <WindowButton $h={29} aria-label="Μεγιστοποίηση"><MaxIcon /></WindowButton>
            <WindowButton $h={29} aria-label="Κλείσιμο"><CloseIcon /></WindowButton>
          </WindowButtons>
        </NoteTitle>
        <NoteMenu>
          {['Αρχείο', 'Επεξεργασία', 'Μορφή', 'Προβολή', 'Βοήθεια'].map((m) => <button key={m}>{m}</button>)}
        </NoteMenu>
        <NoteBody>
          <NotePage>
            <textarea aria-label="misc" defaultValue={noteText} spellCheck={false} />
            <TextCaret />
          </NotePage>
          <ScrollBar $vertical>
            <Chevron dir="up" color="#bfbfbf" sw={2} />
            <Chevron dir="down" color="#bfbfbf" sw={2} />
          </ScrollBar>
          <ScrollBar>
            <Chevron dir="left" color="#bfbfbf" sw={2} />
            <Chevron dir="right" color="#bfbfbf" sw={2} />
          </ScrollBar>
        </NoteBody>
        <NoteStatus>
          <NoteField />
          <NoteField $pad={10}>Γρ. 1, Στ. 16</NoteField>
          <NoteField>100%</NoteField>
          <NoteField>Unix (LF)</NoteField>
          <NoteField $last>
            UTF-8
            <Grip>
              <svg width="9" height="9" viewBox="0 0 9 9"><path d="M6 0h2v2H6zM3 3h2v2H3zM6 3h2v2H6zM0 6h2v2H0zM3 6h2v2H3zM6 6h2v2H6z" fill="#bfbfbf" /></svg>
            </Grip>
          </NoteField>
        </NoteStatus>
      </Notepad>

      <Taskbar>
        <StartButton aria-label="Έναρξη">
          <svg width="16" height="16" viewBox="0 0 16 16"><path d="M0 2.200L6.500 1.300v6.200H0zM7.300 1.200L16 0v7.500H7.300zM0 8.300h6.500v6.300L0 13.700zM7.300 8.300H16V16l-8.700-1.300z" fill="#fff" /></svg>
        </StartButton>
        <TaskSearch>
          <svg width="17" height="17" viewBox="0 0 17 17"><circle cx="10.500" cy="6" r="5.300" fill="none" stroke="#222" strokeWidth="1.300" /><path d="M6.500 10L.6 16.200" stroke="#222" strokeWidth="1.300" /></svg>
          <input aria-label="Αναζήτηση Windows" placeholder="Πληκτρολογήστε εδώ για αναζήτηση" />
        </TaskSearch>
        <TaskView aria-label="Προβολή εργασιών">
          <svg width="17" height="17" viewBox="0 0 17 17">
            <path d="M1 .500v3h9.500v-3M1 16.500v-3h9.500v3M.5 5.500h10.500v6H.5zM14.500 0v3M14.500 9v8" fill="none" stroke="#fff" strokeWidth="1.100" />
            <path d="M13 5h3v3h-3z" fill="#fff" />
          </svg>
        </TaskView>
        {taskApps.map((a) => (
          <TaskButton key={a.name} $state={a.state} aria-label={a.name}>
            {a.icon}
            {a.badge && <Badge $x={26} $y={20}>{a.badge}</Badge>}
          </TaskButton>
        ))}
        <Tray>
          <TrayLabel>Συνδέσεις</TrayLabel>
          <TrayButton aria-label="Κρυφά εικονίδια"><Chevron dir="up" w={14} color="#fff" sw={1} /></TrayButton>
          <TrayButton aria-label="OneDrive">
            <svg width="16" height="10" viewBox="0 0 16 10"><path d="M3 4a4.500 4.500 0 018-2l-3 3-5 1z" fill="#b9bfbd" /><path d="M3 10a3 3 0 010-6c2 0 3 .5 4 1.500l5-2.500c2.500 0 4 1.500 4 3.700S14.500 10 13 10z" fill="#fff" /></svg>
          </TrayButton>
          <TrayButton aria-label="Μπαταρία">
            <svg width="16" height="12" viewBox="0 0 16 12"><path d="M6 2.500h8v8H4.500V8M15 5v3" fill="none" stroke="#fff" /><path d="M7 5h6v4H6z" fill="#fff" /><path d="M1 0v2M4 0v2M0 2.500h5v2l-1.500 1.500h-2L0 4.500zM2.500 6v5" fill="none" stroke="#fff" /></svg>
          </TrayButton>
          <TrayButton aria-label="Δίκτυο">
            <svg width="17" height="14" viewBox="0 0 17 14"><path d="M5 1.500h11v8H3.500V5M9.500 10v3M6 13.500h7M.5.500h4v4h-4z" fill="none" stroke="#fff" /></svg>
          </TrayButton>
          <TrayButton aria-label="Ήχος">
            <svg width="17" height="14" viewBox="0 0 17 14"><path d="M.5 4.500H3L6.500 1v12L3 9.500H.5z" fill="none" stroke="#fff" /><path d="M8.500 5c1 1 1 3 0 4" fill="none" stroke="#fff" /><path d="M10.500 3c2 2 2 6 0 8M13 1c3 3 3 9 0 12" fill="none" stroke="#87918f" /></svg>
          </TrayButton>
          <Language>ΕΛ</Language>
          <Clock>10:28 μμ<br />14/12/2019</Clock>
          <NoticeButton aria-label="Ειδοποιήσεις 21">
            <svg width="16" height="17" viewBox="0 0 16 17"><path d="M0 0h16v13H7l-3 4v-4H0z" fill="#fff" /><path d="M3 3.500h10M3 6.500h10M3 9.500h6" stroke="#1b2a27" /></svg>
            <Badge $x={18} $y={18}>21</Badge>
          </NoticeButton>
          <ShowDesktop aria-label="Εμφάνιση επιφάνειας εργασίας" />
        </Tray>
      </Taskbar>
    </Desktop>
  );
}
